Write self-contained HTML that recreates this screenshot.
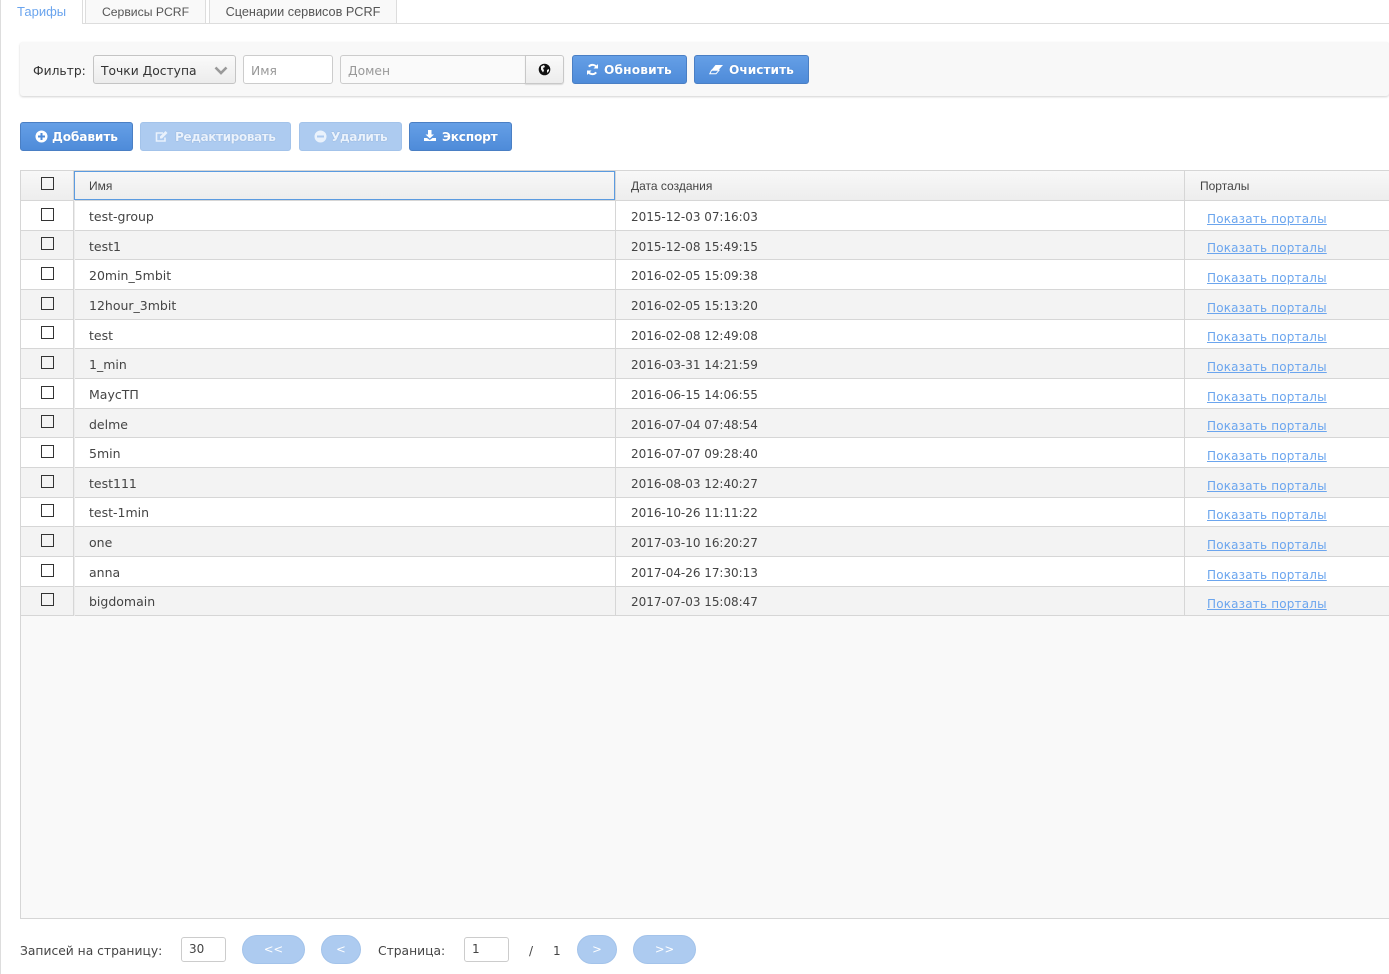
<!DOCTYPE html>
<html><head><meta charset="utf-8">
<style>
html,body{margin:0;padding:0;background:#fff}
#p{position:relative;width:1389px;height:974px;overflow:hidden;background:#fff;font-family:"DejaVu Sans","Liberation Sans",sans-serif;font-size:12px;color:#444}
#p div,#p a,#p svg.a{position:absolute;box-sizing:border-box}
.t{white-space:nowrap;line-height:16px}
.tab{top:0;height:24px;border:1px solid #ddd;border-top:0;background:#f9f9f9;line-height:25px;text-align:center;font-family:"Liberation Sans",sans-serif;color:#555}
.btn{height:29px;border:1px solid #4a7fc4;border-radius:3px;background:linear-gradient(#659fe6,#4e8bd9);color:#fff;font-weight:bold;font-size:12.2px;line-height:29px;white-space:nowrap;letter-spacing:-.1px;text-shadow:0 0 1px rgba(30,70,130,.4)}
.dis{border-color:#a3c3ea;background:#adcbf0;color:#eaf2fc}
.in{border:1px solid #ccc;border-radius:3px;background:#fff;height:29px;line-height:30px;color:#999;padding-left:7px;font-size:12.3px}
.cb{left:41px;width:13px;height:13px;border:1.5px solid #333;background:transparent}
.r{left:21px;width:1368px;height:30px;border-bottom:1px solid #d6d6d6}
.c{white-space:nowrap;line-height:16px;font-size:12px;color:#444;letter-spacing:-.03px}
.n{left:89px;white-space:nowrap;line-height:16px;font-size:12.5px;color:#444}
.lk{left:1207px;white-space:nowrap;color:#6ba5ee;text-decoration:underline;font-size:12px;line-height:16px;letter-spacing:.18px}
.pg{height:29px;border:1px solid #a3c3ea;border-radius:15px;background:#adcbf0;color:#fff;text-align:center;line-height:26px;font-size:11.5px}
.v{width:1px;background:#d6d6d6}
</style></head><body>
<div id="p">
<div style="left:0;top:0;width:1px;height:974px;background:#ddd"></div>

<div style="left:82px;top:23px;width:1307px;height:1px;background:#ddd"></div>
<div class="t" style="left:17px;top:4px;font-family:'Liberation Sans',sans-serif;font-size:13px;color:#6ba5ee">Тарифы</div>
<div style="left:82px;top:0;width:1px;height:24px;background:#ddd"></div>
<div class="tab" style="left:85px;width:121px;font-size:12.2px">Сервисы PCRF</div>
<div class="tab" style="left:209px;width:188px;font-size:12.7px">Сценарии сервисов PCRF</div>

<div style="left:20px;top:42px;width:1369px;height:54px;background:#f8f8f8;border-radius:3px;box-shadow:0 1px 2px rgba(0,0,0,.18)"></div>
<div class="t" style="left:33px;top:63px;font-size:12.3px;color:#333">Фильтр:</div>
<div style="left:93px;top:55px;width:143px;height:29px;border:1px solid #c4c4c4;border-radius:3px;background:linear-gradient(#fafafa,#ececec)"></div>
<div class="t" style="left:101px;top:63px;font-size:12.3px;color:#333">Точки Доступа</div>
<svg class="a" style="left:214px;top:66px" width="14" height="9" viewBox="0 0 14 9"><path d="M1.500 1.500L7 7l5.500-5.500" fill="none" stroke="#999" stroke-width="2.600"/></svg>
<div class="in" style="left:243px;top:55px;width:90px">Имя</div>
<div class="in" style="left:340px;top:55px;width:186px;border-radius:3px 0 0 3px;background:#fafafa">Домен</div>
<div style="left:525px;top:55px;width:39px;height:29px;border:1px solid #c8c8c8;border-radius:0 3px 3px 0;background:linear-gradient(#fafafa,#ececec);box-shadow:0 1px 1px rgba(0,0,0,.12)"></div>
<svg class="a" style="left:538px;top:63px" width="13" height="13" viewBox="0 0 13 13"><circle cx="6.500" cy="6.500" r="5.800" fill="#111"/><path d="M3 3.500l3-1.500 1 2-2 1 1 2.500-1 2-2-3zM9 7l2-1 0 2-2 2z" fill="#f3f3f3"/></svg>

<div class="btn" style="left:572px;top:55px;width:115px;padding-left:31px;letter-spacing:.15px">Обновить</div>
<svg class="a" style="left:586px;top:63px" width="13" height="13" viewBox="0 0 13 13"><path d="M11 5A4.800 4.800 0 0 0 2.800 3.600M2 8a4.800 4.800 0 0 0 8.200 1.400" fill="none" stroke="#fff" stroke-width="2"/><path d="M12 1v4.500H7.500zM1 12V7.500h4.500z" fill="#fff"/></svg>
<div class="btn" style="left:694px;top:55px;width:115px;padding-left:34px;letter-spacing:0">Очистить</div>
<svg class="a" style="left:709px;top:64px" width="15" height="11" viewBox="0 0 15 11"><path d="M6.500 1H14L9.500 6H2.500z" fill="#fff"/><path d="M2.500 6.300L.8 9.800h6.200L10 6.300z" fill="none" stroke="#fff" stroke-width="1"/></svg>

<div class="btn" style="left:20px;top:122px;width:113px;padding-left:31px;letter-spacing:-.15px">Добавить</div>
<svg class="a" style="left:35px;top:130px" width="13" height="13" viewBox="0 0 13 13"><circle cx="6.500" cy="6.500" r="6" fill="#fff"/><path d="M6.500 3v7M3 6.500h7" stroke="#4e8bd9" stroke-width="2"/></svg>
<div class="btn dis" style="left:140px;top:122px;width:151px;padding-left:34px;letter-spacing:-.5px">Редактировать</div>
<svg class="a" style="left:155px;top:130px" width="14" height="13" viewBox="0 0 14 13"><path d="M10 7.500V11H1.500V3H8" fill="none" stroke="#eaf2fc" stroke-width="1.600"/><path d="M5 6.500L10.500 1l2 2L7 8.500H5z" fill="#eaf2fc"/></svg>
<div class="btn dis" style="left:299px;top:122px;width:103px;padding-left:31px;letter-spacing:-.5px">Удалить</div>
<svg class="a" style="left:314px;top:130px" width="13" height="13" viewBox="0 0 13 13"><circle cx="6.500" cy="6.500" r="6" fill="#eaf2fc"/><path d="M3 6.500h7" stroke="#adcbf0" stroke-width="2"/></svg>
<div class="btn" style="left:409px;top:122px;width:103px;padding-left:32px;letter-spacing:-.22px">Экспорт</div>
<svg class="a" style="left:423px;top:129px" width="14" height="13" viewBox="0 0 14 13"><path d="M5 1h3.500v4.500H11L6.800 9.500 2.500 5.500H5z" fill="#fff"/><path d="M1 9h3l2.800 2L9.500 9h3.500v3H1z" fill="#fff"/></svg>

<div style="left:20px;top:170px;width:1369px;height:749px;background:#f9f9f9;border:1px solid #d6d6d6;border-right:0"></div>
<div style="left:21px;top:171px;width:1368px;height:30px;background:linear-gradient(#f8f8f8,#ededed);border-bottom:1px solid #d6d6d6"></div>

<div class="r" style="top:201px;height:30px;background:#fff"></div>
<div class="r" style="top:231px;height:29px;background:#f3f3f3"></div>
<div class="r" style="top:260px;height:30px;background:#fff"></div>
<div class="r" style="top:290px;height:30px;background:#f3f3f3"></div>
<div class="r" style="top:320px;height:29px;background:#fff"></div>
<div class="r" style="top:349px;height:30px;background:#f3f3f3"></div>
<div class="r" style="top:379px;height:30px;background:#fff"></div>
<div class="r" style="top:409px;height:29px;background:#f3f3f3"></div>
<div class="r" style="top:438px;height:30px;background:#fff"></div>
<div class="r" style="top:468px;height:30px;background:#f3f3f3"></div>
<div class="r" style="top:498px;height:29px;background:#fff"></div>
<div class="r" style="top:527px;height:30px;background:#f3f3f3"></div>
<div class="r" style="top:557px;height:30px;background:#fff"></div>
<div class="r" style="top:587px;height:29px;background:#f3f3f3"></div>

<div class="v" style="left:73px;top:171px;height:445px"></div>
<div class="v" style="left:74px;top:171px;height:445px;background:#ececec"></div>
<div class="v" style="left:615px;top:171px;height:445px"></div>
<div class="v" style="left:1184px;top:171px;height:445px"></div>
<div style="left:74px;top:171px;width:541px;height:29px;border:1px solid #5b9be0"></div>

<div class="t" style="left:89px;top:178px;font-family:'Liberation Sans',sans-serif;font-size:12px;color:#444">Имя</div>
<div class="t" style="left:631px;top:178px;font-family:'Liberation Sans',sans-serif;font-size:12px;color:#444">Дата создания</div>
<div class="t" style="left:1200px;top:178px;font-family:'Liberation Sans',sans-serif;font-size:12px;color:#444">Порталы</div>
<div class="cb" style="top:177px"></div>

<div class="cb" style="top:208px"></div><div class="n" style="top:209px">test-group</div><div class="c" style="left:631px;top:209px">2015-12-03 07:16:03</div><a class="lk" style="top:211px">Показать порталы</a>
<div class="cb" style="top:237px"></div><div class="n" style="top:239px">test1</div><div class="c" style="left:631px;top:239px">2015-12-08 15:49:15</div><a class="lk" style="top:240px">Показать порталы</a>
<div class="cb" style="top:267px"></div><div class="n" style="top:268px">20min_5mbit</div><div class="c" style="left:631px;top:268px">2016-02-05 15:09:38</div><a class="lk" style="top:270px">Показать порталы</a>
<div class="cb" style="top:297px"></div><div class="n" style="top:298px">12hour_3mbit</div><div class="c" style="left:631px;top:298px">2016-02-05 15:13:20</div><a class="lk" style="top:300px">Показать порталы</a>
<div class="cb" style="top:326px"></div><div class="n" style="top:328px">test</div><div class="c" style="left:631px;top:328px">2016-02-08 12:49:08</div><a class="lk" style="top:329px">Показать порталы</a>
<div class="cb" style="top:356px"></div><div class="n" style="top:357px">1_min</div><div class="c" style="left:631px;top:357px">2016-03-31 14:21:59</div><a class="lk" style="top:359px">Показать порталы</a>
<div class="cb" style="top:386px"></div><div class="n" style="top:387px">МаусТП</div><div class="c" style="left:631px;top:387px">2016-06-15 14:06:55</div><a class="lk" style="top:389px">Показать порталы</a>
<div class="cb" style="top:415px"></div><div class="n" style="top:417px">delme</div><div class="c" style="left:631px;top:417px">2016-07-04 07:48:54</div><a class="lk" style="top:418px">Показать порталы</a>
<div class="cb" style="top:445px"></div><div class="n" style="top:446px">5min</div><div class="c" style="left:631px;top:446px">2016-07-07 09:28:40</div><a class="lk" style="top:448px">Показать порталы</a>
<div class="cb" style="top:475px"></div><div class="n" style="top:476px">test111</div><div class="c" style="left:631px;top:476px">2016-08-03 12:40:27</div><a class="lk" style="top:478px">Показать порталы</a>
<div class="cb" style="top:504px"></div><div class="n" style="top:505px">test-1min</div><div class="c" style="left:631px;top:505px">2016-10-26 11:11:22</div><a class="lk" style="top:507px">Показать порталы</a>
<div class="cb" style="top:534px"></div><div class="n" style="top:535px">one</div><div class="c" style="left:631px;top:535px">2017-03-10 16:20:27</div><a class="lk" style="top:537px">Показать порталы</a>
<div class="cb" style="top:564px"></div><div class="n" style="top:565px">anna</div><div class="c" style="left:631px;top:565px">2017-04-26 17:30:13</div><a class="lk" style="top:567px">Показать порталы</a>
<div class="cb" style="top:593px"></div><div class="n" style="top:594px">bigdomain</div><div class="c" style="left:631px;top:594px">2017-07-03 15:08:47</div><a class="lk" style="top:596px">Показать порталы</a>

<div class="t" style="left:20px;top:943px;font-size:12.3px;color:#444">Записей на страницу:</div>
<div class="in" style="left:181px;top:937px;width:45px;height:25px;line-height:23px;padding-left:7px;color:#444;font-size:12px">30</div>
<div class="pg" style="left:242px;top:935px;width:63px">&lt;&lt;</div>
<div class="pg" style="left:321px;top:935px;width:40px">&lt;</div>
<div class="t" style="left:378px;top:943px;font-size:12.3px;color:#444">Страница:</div>
<div class="in" style="left:464px;top:937px;width:45px;height:25px;line-height:23px;padding-left:7px;color:#444;font-size:12px">1</div>
<div class="t" style="left:529px;top:943px;color:#444">/</div>
<div class="t" style="left:553px;top:943px;color:#444">1</div>
<div class="pg" style="left:577px;top:935px;width:40px">&gt;</div>
<div class="pg" style="left:633px;top:935px;width:63px">&gt;&gt;</div>
</div>
</body></html>
